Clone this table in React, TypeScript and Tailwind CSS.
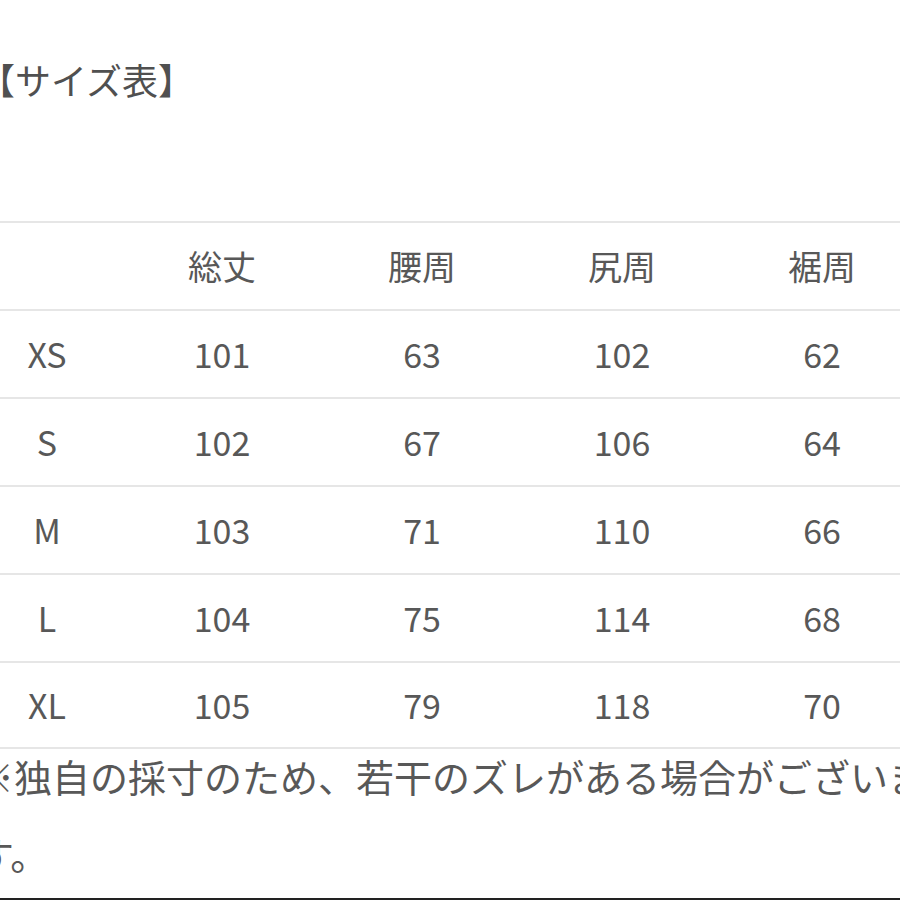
import React from "react";

const rows = [
  ["XS", "101", "63", "102", "62"],
  ["S", "102", "67", "106", "64"],
  ["M", "103", "71", "110", "66"],
  ["L", "104", "75", "114", "68"],
  ["XL", "105", "79", "118", "70"],
];

function Row({ cells, last }: { cells: string[]; last?: boolean }) {
  return (
    <div
      className={
        "grid grid-cols-[122px_200px_200px_200px_200px] h-[88px] items-center border-t-2 border-[#e6e6e6]" +
        (last ? " border-b-2" : "")
      }
    >
      <div className="pr-[28px] text-center">{cells[0]}</div>
      <div className="text-center">{cells[1]}</div>
      <div className="text-center">{cells[2]}</div>
      <div className="text-center">{cells[3]}</div>
      <div className="text-center">{cells[4]}</div>
    </div>
  );
}

export default function App() {
  return (
    <div
      className="w-[900px] h-[900px] bg-white overflow-hidden flex flex-col text-[#585858]"
      style={{ fontFamily: '"Noto Sans CJK JP", "Noto Sans", sans-serif' }}
    >
      <div className="h-[221px] shrink-0 pt-[61px]">
        <div className="ml-[-21px] text-[36px] leading-[36px] text-[#505050] whitespace-nowrap">
          【サイズ表】
        </div>
      </div>
      <div className="w-[922px] shrink-0 text-[34px] leading-none">
        <Row cells={["", "総丈", "腰周", "尻周", "裾周"]} />
        {rows.map((r, i) => (
          <Row key={r[0]} cells={r} last={i === rows.length - 1} />
        ))}
      </div>
      <div className="ml-[-24px] text-[38px] whitespace-nowrap shrink-0">
        <div className="h-[54px] leading-[54px]">
          ※独自の採寸のため、若干のズレがある場合がございま
        </div>
        <div className="h-[54px] leading-[54px] mt-[24px]">す。</div>
      </div>
      <div className="flex-1" />
      <div className="h-[2px] bg-[#222222] shrink-0" />
    </div>
  );
}
